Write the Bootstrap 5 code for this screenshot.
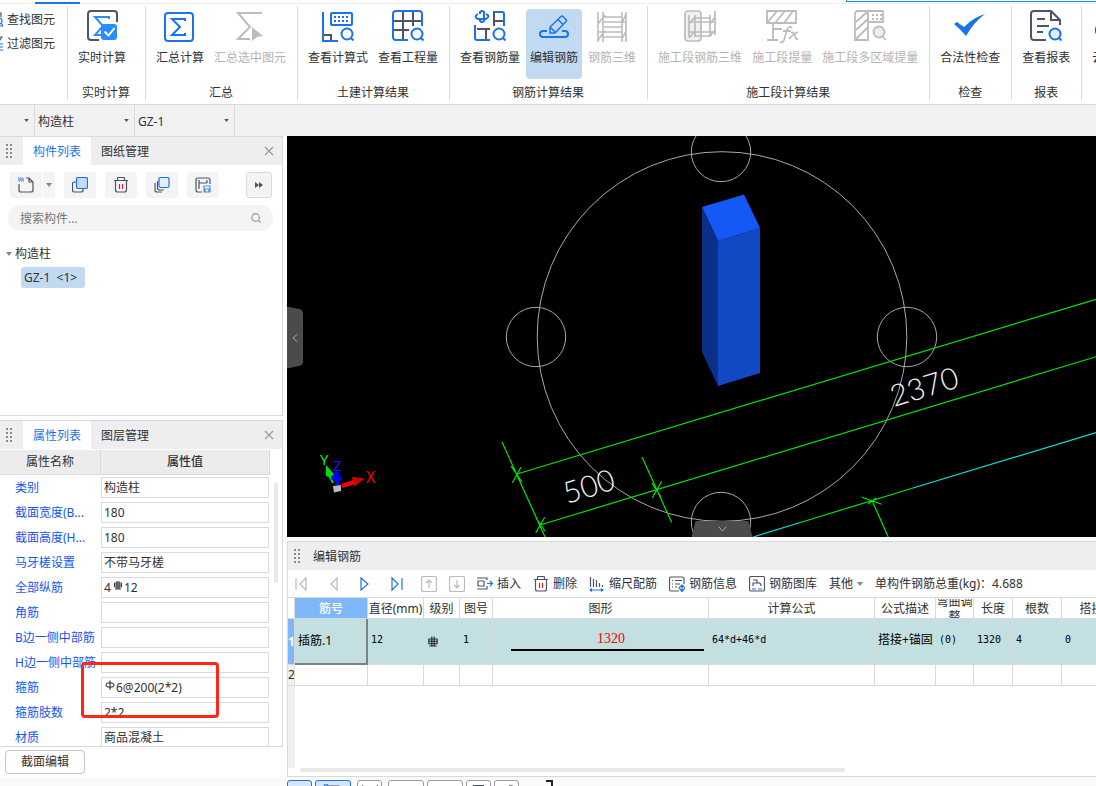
<!DOCTYPE html>
<html lang="zh-CN">
<head>
<meta charset="utf-8">
<meta name="viewport" content="width=device-width, initial-scale=1">
<title>编辑钢筋</title>
<link href="https://cdn.jsdelivr.net/npm/bootstrap@5.3.0/dist/css/bootstrap.min.css" rel="stylesheet">
<style>
:root{--ink:#303133;--blue:#1a73e8;--line:#dadada;--head:#eeeef0;--slate:#4e5465}
body{font:12px/16px "Noto Sans","Noto Sans CJK SC",sans-serif;color:var(--ink);background:#fff}
button{color:inherit;background:none;border:0;padding:0;white-space:nowrap}
svg{display:block;flex:none}
svg.ico{fill:none;stroke:currentColor;stroke-width:1.2}
.b{stroke:var(--blue)}
.s{stroke:var(--slate)}
/* top strip and ribbon */
.strip{height:4px;border-bottom:1px solid #f0f0f0}
.strip-tab{width:45px;height:4px;margin-left:35px;border-bottom:2px solid var(--blue)}
.strip-box{width:250px;height:2px;border-bottom:1px solid #1a8ae8;border-left:1px solid #1a8ae8}
.ribbon{height:101px;border-bottom:1px solid var(--line)}
.rgroup{padding:5px 8px 0 6px;flex:none;position:relative}
.rgroup::after{content:"";position:absolute;right:0;top:2px;bottom:4px;width:1px;background:var(--line)}
.rgroup-find{width:68px;padding:8px 13px 0 0;overflow:hidden}
.rgroup-live{min-width:78px}
.rrow{display:flex;gap:2px}
.rbtn{height:70px;padding:0 4px 13px;border-radius:4px}
.rbtn svg{width:32px;height:36px;margin:0 auto}
.rbtn span{display:block;margin-top:5px}
.rbtn:disabled{color:#b4b4b4}
.rbtn.on{background:#c1d9f1}
.rname{margin-top:6px;text-align:center}
/* selector bar */
.picks{background:#f1f1f1;height:31px}
.picks .form-select{width:100px;height:31px;font-size:12px;line-height:16px;padding:2px 12px 0 3px;border:0;border-right:1px solid var(--line);border-radius:0;color:var(--ink);background-color:#f1f1f1;background-position:right 5px center;background-size:5px 3px;--bs-form-select-bg-img:url("data:image/svg+xml,%3csvg xmlns='http://www.w3.org/2000/svg' viewBox='0 0 6 4'%3e%3cpath d='M0 0h6L3 4z' fill='%23505050'/%3e%3c/svg%3e")}
.picks .form-select.narrow{width:35px}
/* docked panels */
.side{width:283px;margin-right:4px}
.panel{border:1px solid var(--line);border-left:0}
.panel-list{height:280px}
.phead{height:28px;background:var(--head)}
.ptab{height:28px;padding:1px 10px 0}
.ptab.on{background:#fff;color:var(--blue)}
.grip{width:23px;padding-left:6px}
.etitle{padding:1px 0 0 2px}
.tools{padding:7px 10px;gap:9px}
.tool{width:32px;height:26px;background:#f4f4f4;border-radius:3px;display:flex;align-items:center;justify-content:center}
.tool-more{width:26px;border:1px solid var(--line)}
.tool-drop{width:12px}
.search{height:26px;background:#f4f4f4;border-radius:13px;padding:0 12px;margin:0 9px 0 8px}
.search input{font-size:12px;background:none;border:0;outline:0;padding:2px 0 0;min-width:0}
.search input::placeholder{color:#777;opacity:1}
.branch{margin:15px 0 5px 6px;gap:3px}
.leaf{background:#c1d9f1;border-radius:3px;width:64px;height:21px;padding:0 3px;margin-left:21px;text-align:left}
.grid-wrap{overflow:hidden;min-height:0}
.props{width:270px;table-layout:fixed;margin-top:1px;border-collapse:separate;border-spacing:0}
.props thead th{background:#ececec;height:25px;padding:0;text-align:center;font-weight:400;border-right:1px solid var(--line);border-bottom:1px solid var(--line)}
.props thead th+th{font-weight:500}
.props tbody th{font-weight:400;height:25px;padding:0 0 0 15px;color:#1456f0;white-space:nowrap}
.props tbody td{padding:0 1px 0 0}
.pbox{border:1px solid var(--line);height:21px;padding-left:2px;width:168px;background:#fff}
.pbox input{border:0;outline:0;padding:0;background:none;font-size:12px;line-height:16px;min-width:0;color:var(--ink);flex:1}
.pbox input.count{flex:none;width:8px}
.pbox svg{margin:0 1px 3px}
.vbar{width:4px;height:100px;background:#e9e9e9;border-radius:2px;right:4px;top:62px}
.section-btn{border:1px solid #c4c4c4;border-radius:4px;width:80px;height:24px;background:#fff}
.callout{left:81px;top:526px;width:138px;height:56px;border:3px solid #fb2817;border-radius:4px;pointer-events:none;z-index:2}
/* drawing area */
.stage{background:#000;min-height:0;overflow:hidden}
.tab-left{left:0;top:50%;width:16px;height:62px;margin-top:-30px;background:#4b4b4b;clip-path:polygon(0 0,14px 3px,16px 6px,16px 56px,14px 59px,0 62px)}
.tab-down{left:50%;bottom:0;width:61px;height:16px;background:#4b4b4b;clip-path:polygon(4px 0,57px 0,61px 16px,0 16px)}
/* rebar editor */
.editor{margin-top:4px;height:236px;border:1px solid var(--line);border-right:0}
.etools{height:27px;padding:1px 5px 0;gap:12px;white-space:nowrap;overflow:hidden}
.etools button{display:flex;align-items:center;gap:4px;flex:none}
.sheet{width:834px;min-width:100%;table-layout:fixed;border-collapse:separate;border-spacing:0;border-top:1px solid var(--line)}
.sheet th,.sheet td{border-right:1px solid var(--line);border-bottom:1px solid var(--line);padding:0 3px;font-weight:400;overflow:hidden;white-space:nowrap}
.sheet thead th{height:21px;padding:1px 0 0;text-align:center}
.sheet thead th.key{background:#7eb8fb;color:#fff;font-weight:500}
.hwrap{height:19px;display:flex;align-items:center;justify-content:center;white-space:normal;overflow:hidden;line-height:15px}
.sheet tbody th{background:#f0f0f0;padding:0;text-align:center}
.sheet tr.cur td{background:#c2dfe1;height:46px;color:#000;font-size:10px;font-family:"DejaVu Sans Mono",monospace;padding-bottom:3px}
.sheet tr.cur td.word{font-size:12px;font-family:"Noto Sans","Noto Sans CJK SC",sans-serif}
.sheet tr.cur th{background:#7eb8fb;color:#fff;font-weight:700}
.sheet tr.cur td.key{border-right:2px solid #808080;border-bottom:2px solid #808080;padding-bottom:0}
.sheet tr.blank td{height:21px}
.shape{border-bottom:2px solid #000;color:#f00;font:14px/16px "Liberation Serif",serif;margin:2px 1px 0 15px;height:20px;text-align:center;padding-left:7px}
.gutter{width:7px;background:#f0f0f0;flex:1}
.hbar{height:4px;width:545px;background:#e9e9e9;border-radius:2px;margin:0 0 4px 12px}
/* status strip */
.status{height:9px;background:#fafafa;padding:3px 0 0 287px;gap:3px;overflow:hidden}
.status button{flex:none;width:25px;height:24px;border:1px solid #9a9a9a;border-radius:3px;background:#fff;display:flex;justify-content:center;padding-top:3px}
.status button.wide{width:36px}
.status button.apart{margin:0 3px}
.status button.on{border-color:var(--blue);background:#d5e5fa}
</style>
</head>
<body class="vh-100 d-flex flex-column overflow-hidden">

<svg width="0" height="0" class="position-absolute" aria-hidden="true">
  <symbol id="caret" viewBox="0 0 6 4"><path d="M0 0h6L3 4z" fill="#888" stroke="none"/></symbol>
  <symbol id="grip" viewBox="0 0 7 14"><path d="M0 1h2M0 5h2M0 9h2M0 13h2M4 1h2M4 5h2M4 9h2M4 13h2" stroke="#888" stroke-width="2"/></symbol>
  <symbol id="close" viewBox="0 0 10 10"><path d="M1 1l8 8M9 1L1 9" stroke="#999" stroke-width="1.2"/></symbol>
  <symbol id="trash" viewBox="0 0 16 16"><path class="s" d="M1 3.500h14M4.500 3V1.500q0-1 1-1h5q1 0 1 1V3M2.500 4v9q0 2 2 2h7q2 0 2-2V4"/><path d="M6.500 7v5M9.500 7v5" stroke="#e0202a"/></symbol>
  <symbol id="rebar3" viewBox="0 0 10 11"><path d="M1.500 2.500h7v4h-7zM4 .5v8M6 .5v8M2 8.500h6M1 4.500h8" stroke="#222" stroke-width=".9" fill="none"/></symbol>
  <symbol id="rebar1" viewBox="0 0 10 11"><rect x="1" y="2.500" width="8" height="4" rx="2" stroke="#222" fill="none"/><path d="M5 0v9.500" stroke="#222"/></symbol>
</svg>

<div class="strip d-flex justify-content-between flex-shrink-0"><div class="strip-tab"></div><div class="strip-box"></div></div>

<nav class="ribbon d-flex overflow-hidden flex-shrink-0" aria-label="工程量">
  <div class="rgroup rgroup-find d-flex flex-column align-items-end gap-2">
    <button class="d-flex gap-1"><svg class="ico" width="16" height="16"><path class="s" d="M2 1h12v4"/><circle class="b" cx="12" cy="9" r="3"/><path class="b" d="M9 14h7M14 11l2 3"/></svg>查找图元</button>
    <button class="d-flex gap-1"><svg class="ico" width="16" height="16"><path class="s" d="M2 1h13l-4 6"/><path class="b" d="M9 8h7M9 11h7M9 14h7"/></svg>过滤图元</button>
  </div>
  <div class="rgroup rgroup-live">
    <div class="rrow"><button class="rbtn"><svg class="ico" viewBox="0 0 32 36"><path d="M13 31H5q-3 0-3-3V5q0-3 3-3h23q3 0 3 3v8" stroke="#4e5465" stroke-width="2"/><path d="M23 10V8H9l8 9-8 9h7" stroke="#2b8cff" stroke-width="2"/><rect x="15" y="15" width="16" height="16" rx="3" fill="#2b8cff" stroke="none"/><path d="M18.500 22.500l4 4 6-7.500" stroke="#fff" stroke-width="2"/></svg><span>实时计算</span></button></div>
    <div class="rname">实时计算</div>
  </div>
  <div class="rgroup">
    <div class="rrow"><button class="rbtn"><svg class="ico" viewBox="0 0 32 36"><rect class="b" x="1" y="4" width="28" height="28" rx="3" stroke-width="2"/><path class="b" d="M21 12v-2H8l8 8-8 8h13v-2" stroke-width="2"/></svg><span>汇总计算</span></button>
    <button class="rbtn" disabled><svg class="ico" viewBox="0 0 32 36"><path d="M28 4H4l12 14L4 30h12" stroke="#bcbcbc" stroke-width="2"/><path d="M18 18l11 9-6 1-5 4z" fill="#bcbcbc" stroke="none"/></svg><span>汇总选中图元</span></button></div>
    <div class="rname">汇总</div>
  </div>
  <div class="rgroup">
    <div class="rrow"><button class="rbtn"><svg class="ico" viewBox="0 0 32 36"><g stroke-width="2"><path class="b" d="M1 3v29h15"/><path class="s" d="M2 26h7v5"/><rect class="b" x="9" y="4" width="21" height="12" rx="1"/><path class="b" d="M12 8h2m2 0h2m2 0h2m2 0h2M12 12h2m2 0h2m2 0h2m2 0h2"/><circle class="b" cx="25" cy="25" r="5.500"/><path class="b" d="M28.500 28.500l3 3"/></g></svg><span>查看计算式</span></button>
    <button class="rbtn"><svg class="ico" viewBox="0 0 32 36"><g stroke-width="2"><path class="s" d="M11 3v28M21 3v14M2 12h28M2 21h15"/><path class="b" d="M16 31H4q-3 0-3-3V5q0-3 3-3h23q3 0 3 3v12"/><circle class="b" cx="25" cy="25" r="5.500"/><path class="b" d="M28.500 28.500l3 3"/></g></svg><span>查看工程量</span></button></div>
    <div class="rname">土建计算结果</div>
  </div>
  <div class="rgroup">
    <div class="rrow"><button class="rbtn"><svg class="ico" viewBox="0 0 32 36"><g stroke-width="2"><path class="b" d="M6 5V3q2-2 4 0v9q-2 2-4 0v-2M4 5Q-1 8 4 10h8q5-3 0-5"/><path class="s" d="M20 17V2M20 12h9M3 20h13M12 20v10"/><path class="b" d="M20 3h8q2 0 2 2v12M1 16v13q0 2 2 2h13"/><circle class="b" cx="25" cy="25" r="5.500"/><path class="b" d="M28.500 28.500l3 3"/></g></svg><span>查看钢筋量</span></button>
    <button class="rbtn on"><svg class="ico" viewBox="0 0 32 36"><g class="b" stroke-width="2"><path d="M9 22H5q-3 0-3 3 0 3 3 3h22q3 0 3-3 0-3-3-3h-3"/><path d="M12 24v-6L23 7.500q1-1 2 0l3 3q1 1 0 2L17 24zM12 18l5 5M20 10.500l5 5" stroke-width="1.500"/></g></svg><span>编辑钢筋</span></button>
    <button class="rbtn" disabled><svg class="ico" viewBox="0 0 32 36"><path d="M2 3v30M7 3v30M26 3v30M30 3v30M7 8h19M7 13h23M2 23h24M7 28h19M2 15l7-9M26 14l4-9M2 31l7-9M26 30l4-8M8 18h18" stroke="#bcbcbc" stroke-width="1.600"/></svg><span>钢筋三维</span></button></div>
    <div class="rname">钢筋计算结果</div>
  </div>
  <div class="rgroup">
    <div class="rrow"><button class="rbtn" disabled><svg class="ico" viewBox="0 0 32 36"><g stroke="#bcbcbc" stroke-width="1.700"><rect x="1" y="2" width="16" height="30" rx="3" fill="#f0f0f0"/><path d="M5 6v22M11 6v22M26 6v22M31 2v24M5 13h25M10 9h16M5 23h25M11 27h15M5 15l6-7M5 29l6-7M26 15l5-7M26 27l5-6"/></g></svg><span>施工段钢筋三维</span></button>
    <button class="rbtn" disabled><svg class="ico" viewBox="0 0 32 36"><g stroke="#bcbcbc" stroke-width="1.800"><path d="M1 2h29v12H1zM2 13L11 2M9 14l10-12M18 14l9-12M7 14v16M1 31h11M7 20h9M26 19q-3-3-5 2l-3 10q-1 3-4 2M17 22h8M25 24q3-2 4 3t4 2M32 23q-5 2-9 7"/></g></svg><span>施工段提量</span></button>
    <button class="rbtn" disabled><svg class="ico" viewBox="0 0 32 36"><g stroke="#bcbcbc" stroke-width="1.800"><path d="M14 2H4Q1 2 1 5v26h13V2h15v11H15M2 13L13 3M2 21l12-11M2 30l12-12M18 6h2m2 0h2m2 0h2M18 10h2m2 0h2m2 0h2"/><circle cx="25" cy="23" r="5.500" fill="#eee"/><path d="M28.500 27l3 4"/></g></svg><span>施工段多区域提量</span></button></div>
    <div class="rname">施工段计算结果</div>
  </div>
  <div class="rgroup">
    <div class="rrow"><button class="rbtn"><svg class="ico" viewBox="0 0 32 36"><path d="M0 15l3-2 7 5Q20 8 31 5 20 13 12 27 6 20 0 15z" fill="#1a73e8" stroke="none"/></svg><span>合法性检查</span></button></div>
    <div class="rname">检查</div>
  </div>
  <div class="rgroup">
    <div class="rrow"><button class="rbtn"><svg class="ico" viewBox="0 0 32 36"><g stroke-width="2"><path class="s" d="M16 31H4q-3 0-3-3V5q0-3 3-3h17l9 9v5M21 3v8h8M7 10h8M7 17h12M7 23h6"/><circle class="b" cx="25" cy="25" r="5.500" fill="#e4effc"/><path class="b" d="M28.500 28.500l3 3"/></g></svg><span>查看报表</span></button></div>
    <div class="rname">报表</div>
  </div>
  <div class="rgroup">
    <div class="rrow"><button class="rbtn"><svg class="ico" viewBox="0 0 32 36"><path class="s" stroke-width="2" d="M8 27q-7-1-6-7 1-5 6-5 1-9 9-9 7 0 8 7 6 1 6 7t-6 7z"/></svg><span>云指标</span></button></div>
  </div>
</nav>

<div class="picks d-flex flex-shrink-0">
  <select class="form-select narrow" aria-label="楼层"><option></option></select>
  <select class="form-select" aria-label="构件类型"><option>构造柱</option></select>
  <select class="form-select" aria-label="构件"><option>GZ-1</option></select>
</div>

<main class="d-flex flex-grow-1" style="min-height:0">
  <aside class="side d-flex flex-column flex-shrink-0 position-relative">
    <section class="panel panel-list flex-shrink-0">
      <div class="phead d-flex align-items-center">
        <span class="grip"><svg width="7" height="14"><use href="#grip"/></svg></span>
        <button class="ptab on">构件列表</button><button class="ptab">图纸管理</button>
        <button class="ms-auto me-1 px-1" aria-label="关闭"><svg width="10" height="10"><use href="#close"/></svg></button>
      </div>
      <div class="tools d-flex">
        <div class="d-flex"><button class="tool" aria-label="新建"><svg class="ico" width="16" height="16"><path class="s" d="M1 7v6q0 2 2 2h10q2 0 2-2V5l-4-4H8M11 1v4h4"/><path d="M0 1h5M1 2h5M0 3h5M1 4h5" stroke="#1a73e8" stroke-dasharray="1 1"/></svg></button>
        <button class="tool tool-drop ms-auto" style="margin-left:1px!important" aria-label="更多新建"><svg width="6" height="4"><use href="#caret"/></svg></button></div>
        <button class="tool" aria-label="复制"><svg class="ico" width="16" height="16"><path class="s" d="M4 5H2.500Q.5 5 .5 7v6q0 2 2 2H9q2 0 2-2v-1"/><rect class="b" x="4.500" y=".5" width="11" height="11" rx="1.500" fill="#c5dcf8"/></svg></button>
        <button class="tool" aria-label="删除构件"><svg class="ico" width="16" height="16"><use href="#trash"/></svg></button>
        <button class="tool" aria-label="层间复制"><svg class="ico" width="16" height="16"><path class="s" d="M1 6v7q0 2 2 2h5M3.500 4v7q0 2 2 2H10"/><rect class="b" x="5" y=".5" width="10" height="10" rx="1.500" fill="#e2eefc"/></svg></button>
        <button class="tool" aria-label="存档"><svg class="ico" width="16" height="16"><path class="s" d="M7 15H3q-2 0-2-2V3q0-2 2-2h10q2 0 2 2v4M4 3v9M12 3v3M4 6h8"/><path d="M9 9h6v6H9zM10 15v-3h4v3" stroke="#4a8fe8"/></svg></button>
        <button class="tool tool-more ms-auto" aria-label="更多"><svg width="8" height="6"><path d="M0 0l4 3-4 3zM4 0l4 3-4 3z" fill="#4e5465"/></svg></button>
      </div>
      <div class="search d-flex align-items-center"><input class="flex-grow-1" type="text" placeholder="搜索构件..." aria-label="搜索构件"><svg class="ico" width="10" height="10"><circle cx="4.500" cy="4.500" r="3.800" stroke="#999"/><path d="M7.500 7.500l2 2" stroke="#999"/></svg></div>
      <div class="branch d-flex align-items-center"><svg width="6" height="4"><use href="#caret"/></svg>构造柱</div>
      <button class="leaf">GZ-1 &nbsp;&lt;1&gt;</button>
    </section>

    <section class="panel mt-1 flex-grow-1 d-flex flex-column position-relative" style="min-height:0;flex-basis:0">
      <div class="phead d-flex align-items-center flex-shrink-0">
        <span class="grip"><svg width="7" height="14"><use href="#grip"/></svg></span>
        <button class="ptab on">属性列表</button><button class="ptab">图层管理</button>
        <button class="ms-auto me-1 px-1" aria-label="关闭"><svg width="10" height="10"><use href="#close"/></svg></button>
      </div>
      <div class="grid-wrap flex-grow-1">
        <table class="props">
          <colgroup><col style="width:101px"><col></colgroup>
          <thead><tr><th>属性名称</th><th>属性值</th></tr></thead>
          <tbody>
            <tr><th><label for="p1">类别</label></th><td><div class="pbox d-flex align-items-center"><input id="p1" value="构造柱"></div></td></tr>
            <tr><th><label for="p2">截面宽度(B...</label></th><td><div class="pbox d-flex align-items-center"><input id="p2" value="180"></div></td></tr>
            <tr><th><label for="p3">截面高度(H...</label></th><td><div class="pbox d-flex align-items-center"><input id="p3" value="180"></div></td></tr>
            <tr><th><label for="p4">马牙槎设置</label></th><td><div class="pbox d-flex align-items-center"><input id="p4" value="不带马牙槎"></div></td></tr>
            <tr><th><label for="p5">全部纵筋</label></th><td><div class="pbox d-flex align-items-center"><input id="p5" class="count" value="4"><svg width="10" height="12"><use href="#rebar3"/></svg><input value="12" aria-label="纵筋直径"></div></td></tr>
            <tr><th><label for="p6">角筋</label></th><td><div class="pbox d-flex align-items-center"><input id="p6"></div></td></tr>
            <tr><th><label for="p7">B边一侧中部筋</label></th><td><div class="pbox d-flex align-items-center"><input id="p7"></div></td></tr>
            <tr><th><label for="p8">H边一侧中部筋</label></th><td><div class="pbox d-flex align-items-center"><input id="p8"></div></td></tr>
            <tr><th><label for="p9">箍筋</label></th><td><div class="pbox d-flex align-items-center"><svg width="10" height="12"><use href="#rebar1"/></svg><input id="p9" value="6@200(2*2)"></div></td></tr>
            <tr><th><label for="p10">箍筋肢数</label></th><td><div class="pbox d-flex align-items-center"><input id="p10" value="2*2"></div></td></tr>
            <tr><th><label for="p11">材质</label></th><td><div class="pbox d-flex align-items-center"><input id="p11" value="商品混凝土"></div></td></tr>
          </tbody>
        </table>
      </div>
      <div class="vbar position-absolute"></div>
    </section>
    <div class="d-flex" style="padding:3px 5px"><button class="section-btn">截面编辑</button></div>
    <div class="callout position-absolute"></div>
  </aside>

  <div class="flex-grow-1 d-flex flex-column" style="min-width:0">
    <div class="stage flex-grow-1 position-relative">
      <svg class="w-100 h-100" viewBox="287 136 809 401" preserveAspectRatio="xMidYMid slice" fill="none">
        <g stroke="#a8a8a8"><circle cx="722" cy="336.500" r="184.800"/><circle cx="721" cy="152" r="29.700"/><circle cx="907" cy="337" r="29.700"/><circle cx="536" cy="337" r="29.700"/><circle cx="721" cy="522" r="29.700"/></g>
        <path d="M702 207l42-12.500 16 33.500-42 13z" fill="#1459f5"/><path d="M702 207l16 34v145l-16-34z" fill="#0b3088"/><path d="M718 241l42-13v145l-42 13z" fill="#1149c4"/>
        <g stroke="#00e600" stroke-width="1.200"><path d="M517 474L1096 299.300M540 525L1096 356.700M502 442l43.500 96M642 457l29.700 65.500M512.300 482.700l8.700-15.500M535.700 532.700l9-15.500M652.300 497.700l9.400-16.500M511 466l11 16M536 518l9 13M652 483l9 14M802 522l111-34M872 500.500l16.500 37M861.500 497l20 7.300M868 504l8-6"/></g>
        <path d="M753 537l49-15M913 488l183-55.500" stroke="#00e0e0" stroke-width="1.200"/>
        <g fill="#f0f0f0" font-family="Lato" font-weight="300" font-size="30"><text transform="translate(567 504) rotate(-17)">500</text><text transform="translate(894 407) rotate(-17)">2370</text></g>
        <path d="M333 483l-5-10" stroke="#0d0" stroke-width="2"/><path d="M326 465l8 9q-3 5-8 2z" fill="#00dc14"/>
        <path d="M342 486l12-4" stroke="#f00" stroke-width="4"/><path d="M352 477l13 1.500-11 8z" fill="#d00000"/>
        <path d="M333 486l8-1v6l-7 1.500z" fill="#bbb"/><path d="M337 485v-8" stroke="#00f" stroke-width="4"/><path d="M336.500 469l5.500 10q-5 4-11 0z" fill="#0000ff"/>
        <g font-family="Open Sans" font-size="15"><text x="320" y="465" fill="#0f0">Y</text><text x="333" y="471" fill="#1818e0">Z</text><text x="366" y="483" fill="#f00" font-size="16">X</text></g>
      </svg>
      <button class="tab-left position-absolute d-flex align-items-center justify-content-center" aria-label="收起左侧"><svg width="6" height="8"><path d="M5.500 0L1 4l4.500 4" fill="none" stroke="#aaa"/></svg></button>
      <button class="tab-down position-absolute d-flex align-items-center justify-content-center" aria-label="收起下方"><svg width="9" height="6"><path d="M.5 .5l4 4.500 4-4.500" fill="none" stroke="#aaa"/></svg></button>
    </div>

    <section class="editor d-flex flex-column flex-shrink-0">
      <div class="phead d-flex align-items-center flex-shrink-0"><span class="grip"><svg width="7" height="14"><use href="#grip"/></svg></span><span class="etitle">编辑钢筋</span></div>
      <div class="etools d-flex align-items-center flex-shrink-0">
        <div class="d-flex gap-3 me-1">
          <button aria-label="首条"><svg class="ico" width="16" height="16"><path d="M3 2v12M13 2L7 8l6 6z" stroke="#bbb"/></svg></button>
          <button aria-label="上一条"><svg class="ico" width="16" height="16"><path d="M12 2L6 8l6 6z" stroke="#bbb"/></svg></button>
          <button aria-label="下一条"><svg class="ico" width="16" height="16"><path class="b" d="M4 2l7 6-7 6z"/></svg></button>
          <button aria-label="末条"><svg class="ico" width="16" height="16"><path class="b" d="M3 2l6 6-6 6zM13 2v12"/></svg></button>
        </div>
        <button aria-label="上移"><svg class="ico" width="16" height="16"><path d="M2.500.5h11q2 0 2 2v11q0 2-2 2h-11q-2 0-2-2v-11q0-2 2-2zM8 12V4M5 7l3-3 3 3" stroke="#bbb"/></svg></button>
        <button aria-label="下移"><svg class="ico" width="16" height="16"><path d="M2.500.5h11q2 0 2 2v11q0 2-2 2h-11q-2 0-2-2v-11q0-2 2-2zM8 4v8M5 9l3 3 3-3" stroke="#bbb"/></svg></button>
        <button><svg class="ico" width="16" height="16"><path class="s" d="M10 4V2H0M10 10v3H0M7 5H1v5h6V5"/><path class="b" d="M10 7.500h5.500M13 5l2.500 2.500L13 10"/></svg>插入</button>
        <button><svg class="ico" width="16" height="16"><use href="#trash"/></svg>删除</button>
        <button><svg class="ico" width="16" height="16"><path class="s" d="M1.500 1v10M4.500 3v8M7.500 4v7M10.500 7v4M13.500 9v2"/><path class="b" d="M1 14h13M3 12.500L1 14l2 1.500M12 12.500l2 1.500-2 1.500"/></svg>缩尺配筋</button>
        <button><svg class="ico" width="16" height="16"><path class="s" d="M10 15H2q-1.500 0-1.500-1.500v-11Q.5 1 2 1h11.500Q15 1 15 2.500V8M3 4.500h1M6 4.500h7M3 8h1M6 8h5M3 11h1M6 11h2"/><path class="b" d="M13 9l3 3-3 3.500L10 12zM13 9v6"/></svg>钢筋信息</button>
        <button><svg class="ico" width="16" height="16"><rect class="s" x=".5" y=".5" width="15" height="14.500" rx="1.500"/><path class="s" d="M4 4h4v3H4v3M8 7q4-1 4 3"/><path class="b" d="M3 13h4M9 13h4"/></svg>钢筋图库</button>
        <button>其他<svg width="6" height="4"><use href="#caret"/></svg></button>
        <span>单构件钢筋总重(kg)：4.688</span>
      </div>
      <div class="grid-wrap flex-grow-1 d-flex flex-column">
        <table class="sheet flex-shrink-0">
          <colgroup><col style="width:7px"><col style="width:73px"><col style="width:56px"><col style="width:36px"><col style="width:33px"><col style="width:216px"><col style="width:166px"><col style="width:61px"><col style="width:38px"><col style="width:39px"><col style="width:49px"><col></colgroup>
          <thead><tr><th></th><th class="key">筋号</th><th>直径(mm)</th><th>级别</th><th>图号</th><th>图形</th><th>计算公式</th><th>公式描述</th><th><div class="hwrap">弯曲调整</div></th><th>长度</th><th>根数</th><th>搭接</th></tr></thead>
          <tbody>
            <tr class="cur"><th>1</th><td class="key word">插筋.1</td><td>12</td><td><svg class="mt-1" width="12" height="13"><use href="#rebar3"/></svg></td><td>1</td><td><div class="shape">1320</div></td><td>64*d+46*d</td><td class="word">搭接+锚固</td><td>(0)</td><td>1320</td><td>4</td><td>0</td></tr>
            <tr class="blank"><th>2</th><td></td><td></td><td></td><td></td><td></td><td></td><td></td><td></td><td></td><td></td><td></td></tr>
          </tbody>
        </table>
        <div class="gutter"></div>
      </div>
      <div class="hbar flex-shrink-0"></div>
    </section>
  </div>
</main>

<footer class="status d-flex flex-shrink-0">
  <button class="on" aria-label="捕捉"></button>
  <button class="on wide" aria-label="正交"><svg width="20" height="10" fill="none"><rect x="2" y="2" width="14" height="7" stroke="#4e5465"/><circle cx="3" cy="2" r="2" stroke="#1a73e8"/></svg></button>
  <button class="apart" aria-label="交点"><svg width="16" height="14"><path d="M0 1l14 12M16 1L2 13" stroke="#777"/></svg></button>
  <button class="wide" aria-label="垂点"></button>
  <button class="wide" aria-label="中点"></button>
  <button aria-label="顶点"><svg width="12" height="8"><path d="M0 2h10v6" stroke="#4e5465" fill="none" stroke-width="2"/></svg></button>
  <button aria-label="坐标"><svg width="14" height="10"><path d="M1 10L10 1l3 1" stroke="#777" fill="none"/></svg></button>
  <svg class="ms-4" width="8" height="8"><path d="M0 1h6v6" stroke="#222" stroke-width="2" fill="none"/></svg>
</footer>

<script src="https://cdn.jsdelivr.net/npm/bootstrap@5.3.0/dist/js/bootstrap.bundle.min.js"></script>
</body>
</html>
